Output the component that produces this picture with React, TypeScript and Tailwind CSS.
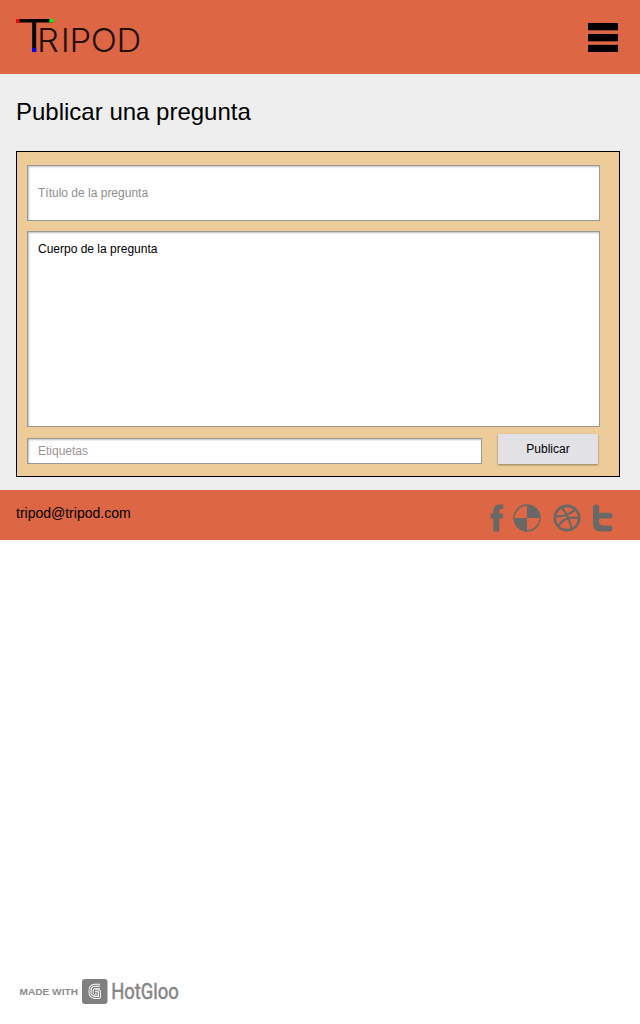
import React from 'react';

const fieldClass =
  'block resize-none rounded-none border border-[#999] bg-white px-[10px] text-[12px] text-black outline-none shadow-[inset_1px_1px_2px_rgba(0,0,0,0.25)]';

function Logo() {
  return (
    <svg className="block h-[46px] w-[140px] overflow-visible" viewBox="0 0 140 46" role="img" aria-label="Tripod">
      <rect x="0" y="1" width="37" height="3.5" fill="#000" />
      <rect x="16.2" y="1" width="4" height="32.5" fill="#000" />
      <rect x="0" y="1" width="3.6" height="3.5" fill="#f00" />
      <rect x="33.4" y="1" width="4" height="3.5" fill="#0f0" />
      <rect x="16.2" y="30" width="4" height="4" fill="#00f" />
      <text transform="scale(1.06 1)" x="19.9 42.2 50.5 70.6 94.8" y="33.7" fontFamily="Inter, sans-serif" fontWeight="300" fontSize="32.5" fill="#24100a">
        RIPOD
      </text>
    </svg>
  );
}

function MenuButton() {
  return (
    <button type="button" aria-label="Menu" className="flex h-[29px] w-[30px] flex-col justify-between">
      <span className="h-[7px] w-full bg-black shadow-[0_1px_0_rgba(0,0,0,0.3)]" />
      <span className="h-[7px] w-full bg-black shadow-[0_1px_0_rgba(0,0,0,0.3)]" />
      <span className="h-[7px] w-full bg-black shadow-[0_-1px_0_rgba(0,0,0,0.15)]" />
    </button>
  );
}

function SocialIcons() {
  return (
    <svg className="block h-[28px] w-[124px]" viewBox="0 0 124 28" fill="#696866">
      <path d="M3.3 27.5V14.5H.5V9.5h2.8V7C3.3 2.8 5.5.5 9.5.5h3.8V5H11c-1.2 0-1.7.6-1.7 1.8v2.7h4l-.5 5H9.3v13z" />
      <circle cx="37" cy="14" r="12.9" fill="none" stroke="#696866" strokeWidth="1.5" />
      <path d="M37 14V.8A13.2 13.2 0 0 1 50.2 14zM37 14v13.2A13.2 13.2 0 0 1 23.8 14z" />
      <g fill="none" stroke="#696866" strokeWidth="2.2">
        <circle cx="77" cy="14" r="12.2" strokeWidth="2.7" />
        <path d="M64.8 12.3c8.5.2 15.5-1.7 20.9-7.4M67.8 22.6c4.6-7.4 11.5-10.5 21.2-8.2M71.7 3.4c5.1 6.3 8.4 13.5 10 21.7" />
      </g>
      <path d="M103 3.6a3.1 3.1 0 0 1 6.2 0v5.2h10.3a2.9 2.9 0 0 1 0 5.8h-10.3v3.1c0 2.6 1.2 3.8 3.8 3.8h6.5a3 3 0 0 1 0 6H111c-5.2 0-8-2.8-8-8z" />
    </svg>
  );
}

function MadeWith() {
  return (
    <div className="flex h-[26px] items-center pl-[18px] text-[#858585]">
      <svg className="block h-[26px] w-[170px] overflow-visible" viewBox="-2 0 170 26" role="img" aria-label="Made with HotGloo">
        <text x="-0.5" y="17.3" fontFamily="Liberation Sans, Arial, sans-serif" fontWeight="700" fontSize="9.5" textLength="58.5" lengthAdjust="spacingAndGlyphs" fill="#8b8b8b">
          MADE WITH
        </text>
        <rect x="62" y="1" width="25.5" height="25" rx="3" fill="#808080" />
        <g fill="none" stroke="#fff" strokeLinejoin="round">
          <path d="M80 8.3H75Q71 8.3 71 13.4t4 5h3.4v-4.6H75" strokeWidth="5" />
          <path d="M80.2 8.3H75Q71 8.3 71 13.4t4 5h3.4v-4.6H75" stroke="#808080" strokeWidth="3.2" />
          <path d="M80 8.3H75Q71 8.3 71 13.4t4 5h3.4v-4.6H75" strokeWidth="1.1" />
        </g>
        <text x="91.2" y="20.7" fontFamily="Roboto, sans-serif" fontWeight="400" fontSize="21.5" textLength="67.6" lengthAdjust="spacingAndGlyphs" fill="#858585" stroke="#858585" strokeWidth="0.5">
          HotGloo
        </text>
      </svg>
    </div>
  );
}

export default function App() {
  return (
    <div className="flex h-screen min-h-[1024px] flex-col bg-white font-['Liberation_Sans',Arial,sans-serif] text-black">
      <header className="flex h-[74px] items-start justify-between bg-[#dd6744] pl-4 pr-[22px]">
        <div className="pt-[18px]">
          <Logo />
        </div>
        <div className="pt-[23px]">
          <MenuButton />
        </div>
      </header>

      <main className="h-[416px] bg-[#eee] pl-4 pr-5 pt-[23px]">
        <h1 className="h-[54px] text-[24px] leading-[30px]">Publicar una pregunta</h1>
        <form className="h-[326px] border border-black bg-[#edcc99] pl-[10px] pr-[19px] pt-[13px]">
          <input className={`${fieldClass} h-[56px] w-full placeholder:text-[#8e8e8e]`} placeholder="Título de la pregunta" />
          <textarea className={`${fieldClass} mt-[10px] h-[196px] w-full pt-[10px] leading-[14px]`} defaultValue="Cuerpo de la pregunta" />
          <div className="flex items-start pt-[7px]">
            <input className={`${fieldClass} mt-1 h-[26px] w-[455px] placeholder:text-[#9b9494]`} placeholder="Etiquetas" />
            <button type="button" className="ml-4 h-[30px] w-[100px] bg-[#e1e1e6] text-[12px] shadow-[0_1px_2px_rgba(0,0,0,0.4)]">
              Publicar
            </button>
          </div>
        </form>
      </main>

      <footer className="flex h-[50px] items-start justify-between bg-[#dd6744] pl-4 pr-[26px]">
        <p className="pt-[14px] text-[14px] leading-[18px]">tripod@tripod.com</p>
        <div className="pt-[14px]">
          <SocialIcons />
        </div>
      </footer>

      <div className="mt-auto pb-5">
        <MadeWith />
      </div>
    </div>
  );
}
